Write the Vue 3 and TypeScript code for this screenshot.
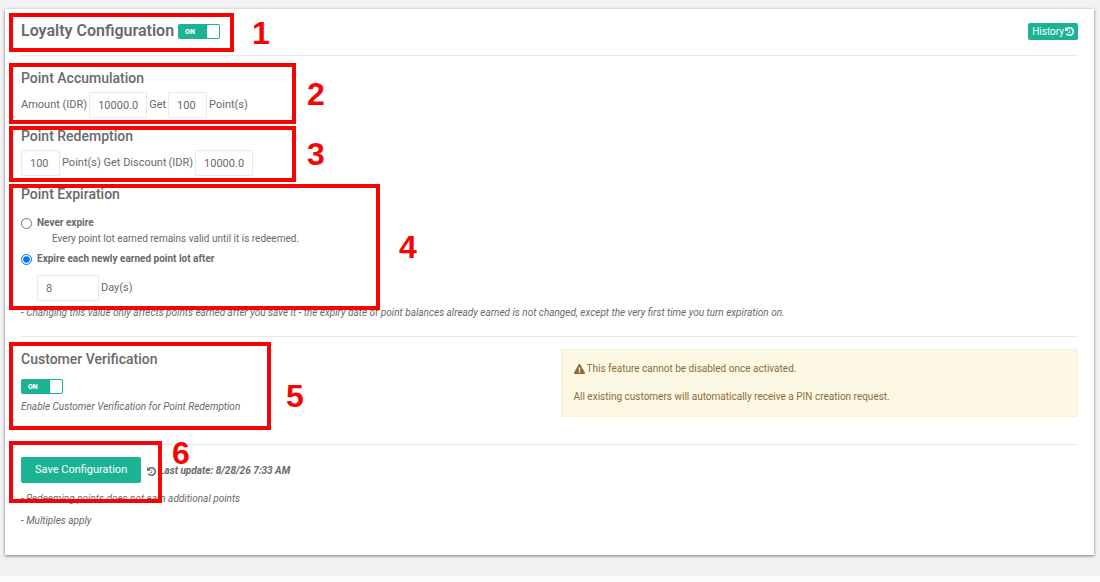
<script setup lang="ts">
import { ref } from 'vue'

interface Callout {
  id: number
  left: number
  top: number
  width: number
  height: number
  labelLeft: number
  labelTop: number
}

const loyaltyOn = ref(true)
const verificationOn = ref(true)
const earnAmount = ref('10000.00')
const earnPoints = ref('100')
const redeemPoints = ref('100')
const redeemAmount = ref('10000.00')
const expiry = ref<'never' | 'after'>('after')
const expiryDays = ref('8')

const callouts: Callout[] = [
  { id: 1, left: 9, top: 13, width: 225, height: 39, labelLeft: 252, labelTop: 16 },
  { id: 2, left: 9, top: 63, width: 287, height: 61, labelLeft: 307, labelTop: 77 },
  { id: 3, left: 9, top: 126, width: 287, height: 56, labelLeft: 307, labelTop: 137 },
  { id: 4, left: 9, top: 184, width: 371, height: 126, labelLeft: 399, labelTop: 230 },
  { id: 5, left: 9, top: 342, width: 262, height: 88, labelLeft: 286, labelTop: 379 },
  { id: 6, left: 9, top: 441, width: 153, height: 62, labelLeft: 172, labelTop: 436 },
]

const px = (n: number) => `${n}px`

const historyPath =
  'M1536 768q0 156-61 298t-164 245-245 164-298 61q-172 0-327-72.500t-264-204.500q-7-10-6.500-22.500t8.500-20.500l137-138q10-9 25-9 16 2 23 12 73 95 179 147t225 52q104 0 198.500-40.500t163.500-109.500 109.500-163.500 40.500-198.500-40.500-198.500-109.500-163.500-163.500-109.500-198.500-40.500q-98 0-188 35.500t-160 101.500l137 138q31 30 14 69-17 40-59 40h-448q-26 0-45-19t-19-45v-448q0-42 40-59 39-17 69 14l130 129q107-101 244.500-156.500t284.500-55.500q156 0 298 61t245 164 164 245 61 298zm-640-288v448q0 14-9 23t-23 9h-320q-14 0-23-9t-9-23v-64q0-14 9-23t23-9h224v-352q0-14 9-23t23-9h64q14 0 23 9t9 23z'
const warningPath =
  'M569.517 440.013C587.975 472.007 564.806 512 527.94 512H48.054c-36.937 0-59.999-40.055-41.577-71.987L246.423 23.985c18.467-32.009 64.72-31.951 83.154 0l239.94 416.028zM288 354c-25.405 0-46 20.595-46 46s20.595 46 46 46 46-20.595 46-46-20.595-46-46-46zm-43.673-165.346l7.418 136c.347 6.364 5.609 11.346 11.982 11.346h48.546c6.373 0 11.635-4.982 11.982-11.346l7.418-136c.375-6.874-5.098-12.654-11.982-12.654h-63.383c-6.884 0-12.356 5.78-11.981 12.654z'
</script>

<template>
  <div class="page">
    <main class="card">
      <header class="head">
        <h1 id="loyalty-title">Loyalty Configuration</h1>
        <label class="switch">
          <input v-model="loyaltyOn" type="checkbox" role="switch" aria-labelledby="loyalty-title" />
          <span class="state">{{ loyaltyOn ? 'ON' : 'OFF' }}</span>
          <span class="knob"></span>
        </label>
        <button type="button" class="history">
          History
          <svg class="icon" viewBox="0 0 1536 1536" aria-hidden="true"><path :d="historyPath" /></svg>
        </button>
      </header>
      <hr />

      <section class="group">
        <h2>Point Accumulation</h2>
        <div class="row">
          <label for="earn-amount">Amount (IDR)</label>
          <input id="earn-amount" v-model="earnAmount" class="field money" type="text" />
          <label for="earn-points">Get</label>
          <input id="earn-points" v-model="earnPoints" class="field points" type="text" />
          <span>Point(s)</span>
        </div>
      </section>

      <section class="group">
        <h2>Point Redemption</h2>
        <div class="row">
          <input id="redeem-points" v-model="redeemPoints" class="field points" type="text" />
          <label for="redeem-points">Point(s) Get Discount</label>
          <label for="redeem-amount">(IDR)</label>
          <input id="redeem-amount" v-model="redeemAmount" class="field money" type="text" />
        </div>
      </section>

      <section class="expiration">
        <h2>Point Expiration</h2>
        <label class="choice">
          <input v-model="expiry" type="radio" name="expiry" value="never" />
          Never expire
        </label>
        <p class="hint">Every point lot earned remains valid until it is redeemed.</p>
        <label class="choice">
          <input v-model="expiry" type="radio" name="expiry" value="after" />
          Expire each newly earned point lot after
        </label>
        <div class="row days-row">
          <input id="expiry-days" v-model="expiryDays" class="field days" type="text" />
          <label for="expiry-days">Day(s)</label>
        </div>
        <p class="note">
          - Changing this value only affects points earned after you save it - the expiry date of point balances
          already earned is not changed, except the very first time you turn expiration on.
        </p>
      </section>
      <hr />

      <section class="verification">
        <div class="verify">
          <h2 id="verify-title">Customer Verification</h2>
          <label class="switch">
            <input v-model="verificationOn" type="checkbox" role="switch" aria-labelledby="verify-title" />
            <span class="state">{{ verificationOn ? 'ON' : 'OFF' }}</span>
            <span class="knob"></span>
          </label>
          <p class="note">Enable Customer Verification for Point Redemption</p>
        </div>
        <div class="alert" role="note">
          <p>
            <svg class="icon" viewBox="0 0 576 512" aria-hidden="true"><path :d="warningPath" /></svg>
            This feature cannot be disabled once activated.
          </p>
          <p>All existing customers will automatically receive a PIN creation request.</p>
        </div>
      </section>
      <hr />

      <footer class="foot">
        <div class="save-row">
          <button type="button" class="save">Save Configuration</button>
          <span class="updated">
            <svg class="icon" viewBox="0 0 1536 1536" aria-hidden="true"><path :d="historyPath" /></svg>
            Last update: 8/28/26 7:33 AM
          </span>
        </div>
        <p class="note">- Redeeming points does not earn additional points</p>
        <p class="note">- Multiples apply</p>
      </footer>
    </main>

    <template v-for="c in callouts" :key="c.id">
      <div
        class="callout"
        :style="{ left: px(c.left), top: px(c.top), width: px(c.width), height: px(c.height) }"
      ></div>
      <span class="callout-number" :style="{ left: px(c.labelLeft), top: px(c.labelTop) }">{{ c.id }}</span>
    </template>
  </div>
</template>

<style>
body {
  margin: 0;
  background: #fcfcfc;
}
</style>

<style scoped>
.page,
.page * {
  box-sizing: border-box;
}
.page {
  position: relative;
  padding: 9px 6px 21px 5px;
  background: #f2f2f4;
  color: #676a6c;
  font: 11px/16px Roboto, 'Liberation Sans', sans-serif;
}
.card {
  padding: 11px 16px 26px;
  background: #fff;
  box-shadow: 0 1px 3px rgba(0, 0, 0, 0.5);
}
h1,
h2,
p {
  margin: 0;
}
h1 {
  padding-bottom: 2px;
  font-size: 16px;
  line-height: 20px;
  font-weight: 600;
}
h2 {
  font-size: 14px;
  line-height: 16px;
  font-weight: 500;
}
hr {
  height: 1px;
  margin: 0;
  border: 0;
  background: #e7e8ea;
}
.icon {
  flex: none;
  width: 9px;
  height: 9px;
  fill: currentColor;
}
.head {
  display: flex;
  align-items: center;
  gap: 4px;
  height: 23px;
  margin-bottom: 12px;
}
.switch {
  position: relative;
  display: flex;
  align-items: center;
  justify-content: space-between;
  width: 42px;
  height: 15px;
  padding: 1px;
  border-radius: 2px;
  background: #1ab394;
  color: #fff;
  cursor: pointer;
}
.switch input {
  position: absolute;
  inset: 0;
  width: 100%;
  height: 100%;
  margin: 0;
  opacity: 0;
}
.state {
  padding-left: 6px;
  font-size: 7px;
  font-weight: 900;
}
.knob {
  width: 12px;
  height: 13px;
  border-radius: 1px;
  background: #fff;
}
.history {
  display: flex;
  align-items: center;
  gap: 1px;
  height: 17px;
  margin-left: auto;
  padding: 0 4px;
  border: 0;
  border-radius: 2px;
  background: #1ab394;
  color: #fff;
  font: 400 10px/16px Roboto, sans-serif;
}
.group {
  padding-bottom: 10px;
}
hr + .group {
  padding-top: 14px;
}
.row {
  display: flex;
  align-items: center;
  gap: 2px;
}
.group .row {
  margin-top: 6px;
}
.field {
  height: 26px;
  padding: 0 8px;
  border: 1px solid #e9eaec;
  border-radius: 1px;
  background: #fff;
  color: #676a6c;
  font: inherit;
}
.money {
  width: 58px;
}
.points {
  width: 39px;
}
.days {
  width: 62px;
}
.choice {
  display: flex;
  align-items: center;
  gap: 5px;
  font-size: 10px;
  font-weight: 700;
}
.choice input {
  width: 11px;
  height: 11px;
  margin: 0;
}
h2 + .choice {
  margin-top: 13px;
}
.hint {
  margin-bottom: 4px;
  padding-left: 31px;
  font-size: 10px;
}
.days-row {
  margin: 8px 0 4px 16px;
}
.note {
  font-size: 10px;
  font-style: italic;
}
.expiration {
  padding-bottom: 15px;
}
.verification {
  display: grid;
  grid-template-columns: 1fr 1fr;
  gap: 22px;
  align-items: start;
  padding: 12px 0 27px;
}
.verify {
  padding-top: 2px;
}
.verify .switch {
  margin: 12px 0 5px;
}
.alert {
  display: grid;
  gap: 12px;
  padding: 11px 12px;
  border: 1px solid #faf2cc;
  border-radius: 2px;
  background: #fcf8e3;
  color: #8a6d3b;
  font-size: 10px;
}
.alert p {
  display: flex;
  align-items: center;
  gap: 2px;
}
.alert .icon {
  width: 11px;
  height: 10px;
}
.foot {
  padding-top: 12px;
}
.save-row {
  display: flex;
  align-items: center;
  gap: 6px;
  margin-bottom: 8px;
}
.save {
  height: 26px;
  padding: 0 14px;
  border: 0;
  border-radius: 2px;
  background: #1ab394;
  color: #fff;
  font: 400 11px/16px Roboto, sans-serif;
}
.updated {
  display: flex;
  align-items: center;
  gap: 3px;
  padding-top: 2px;
  font-size: 10px;
  font-style: italic;
  font-weight: 700;
}
.note + .note {
  margin-top: 6px;
}
.callout {
  position: absolute;
  border: 4px solid #f60404;
  pointer-events: none;
}
.callout-number {
  position: absolute;
  color: #f60404;
  font: 700 32px/34px 'Liberation Sans', Arial, sans-serif;
  pointer-events: none;
}
</style>
